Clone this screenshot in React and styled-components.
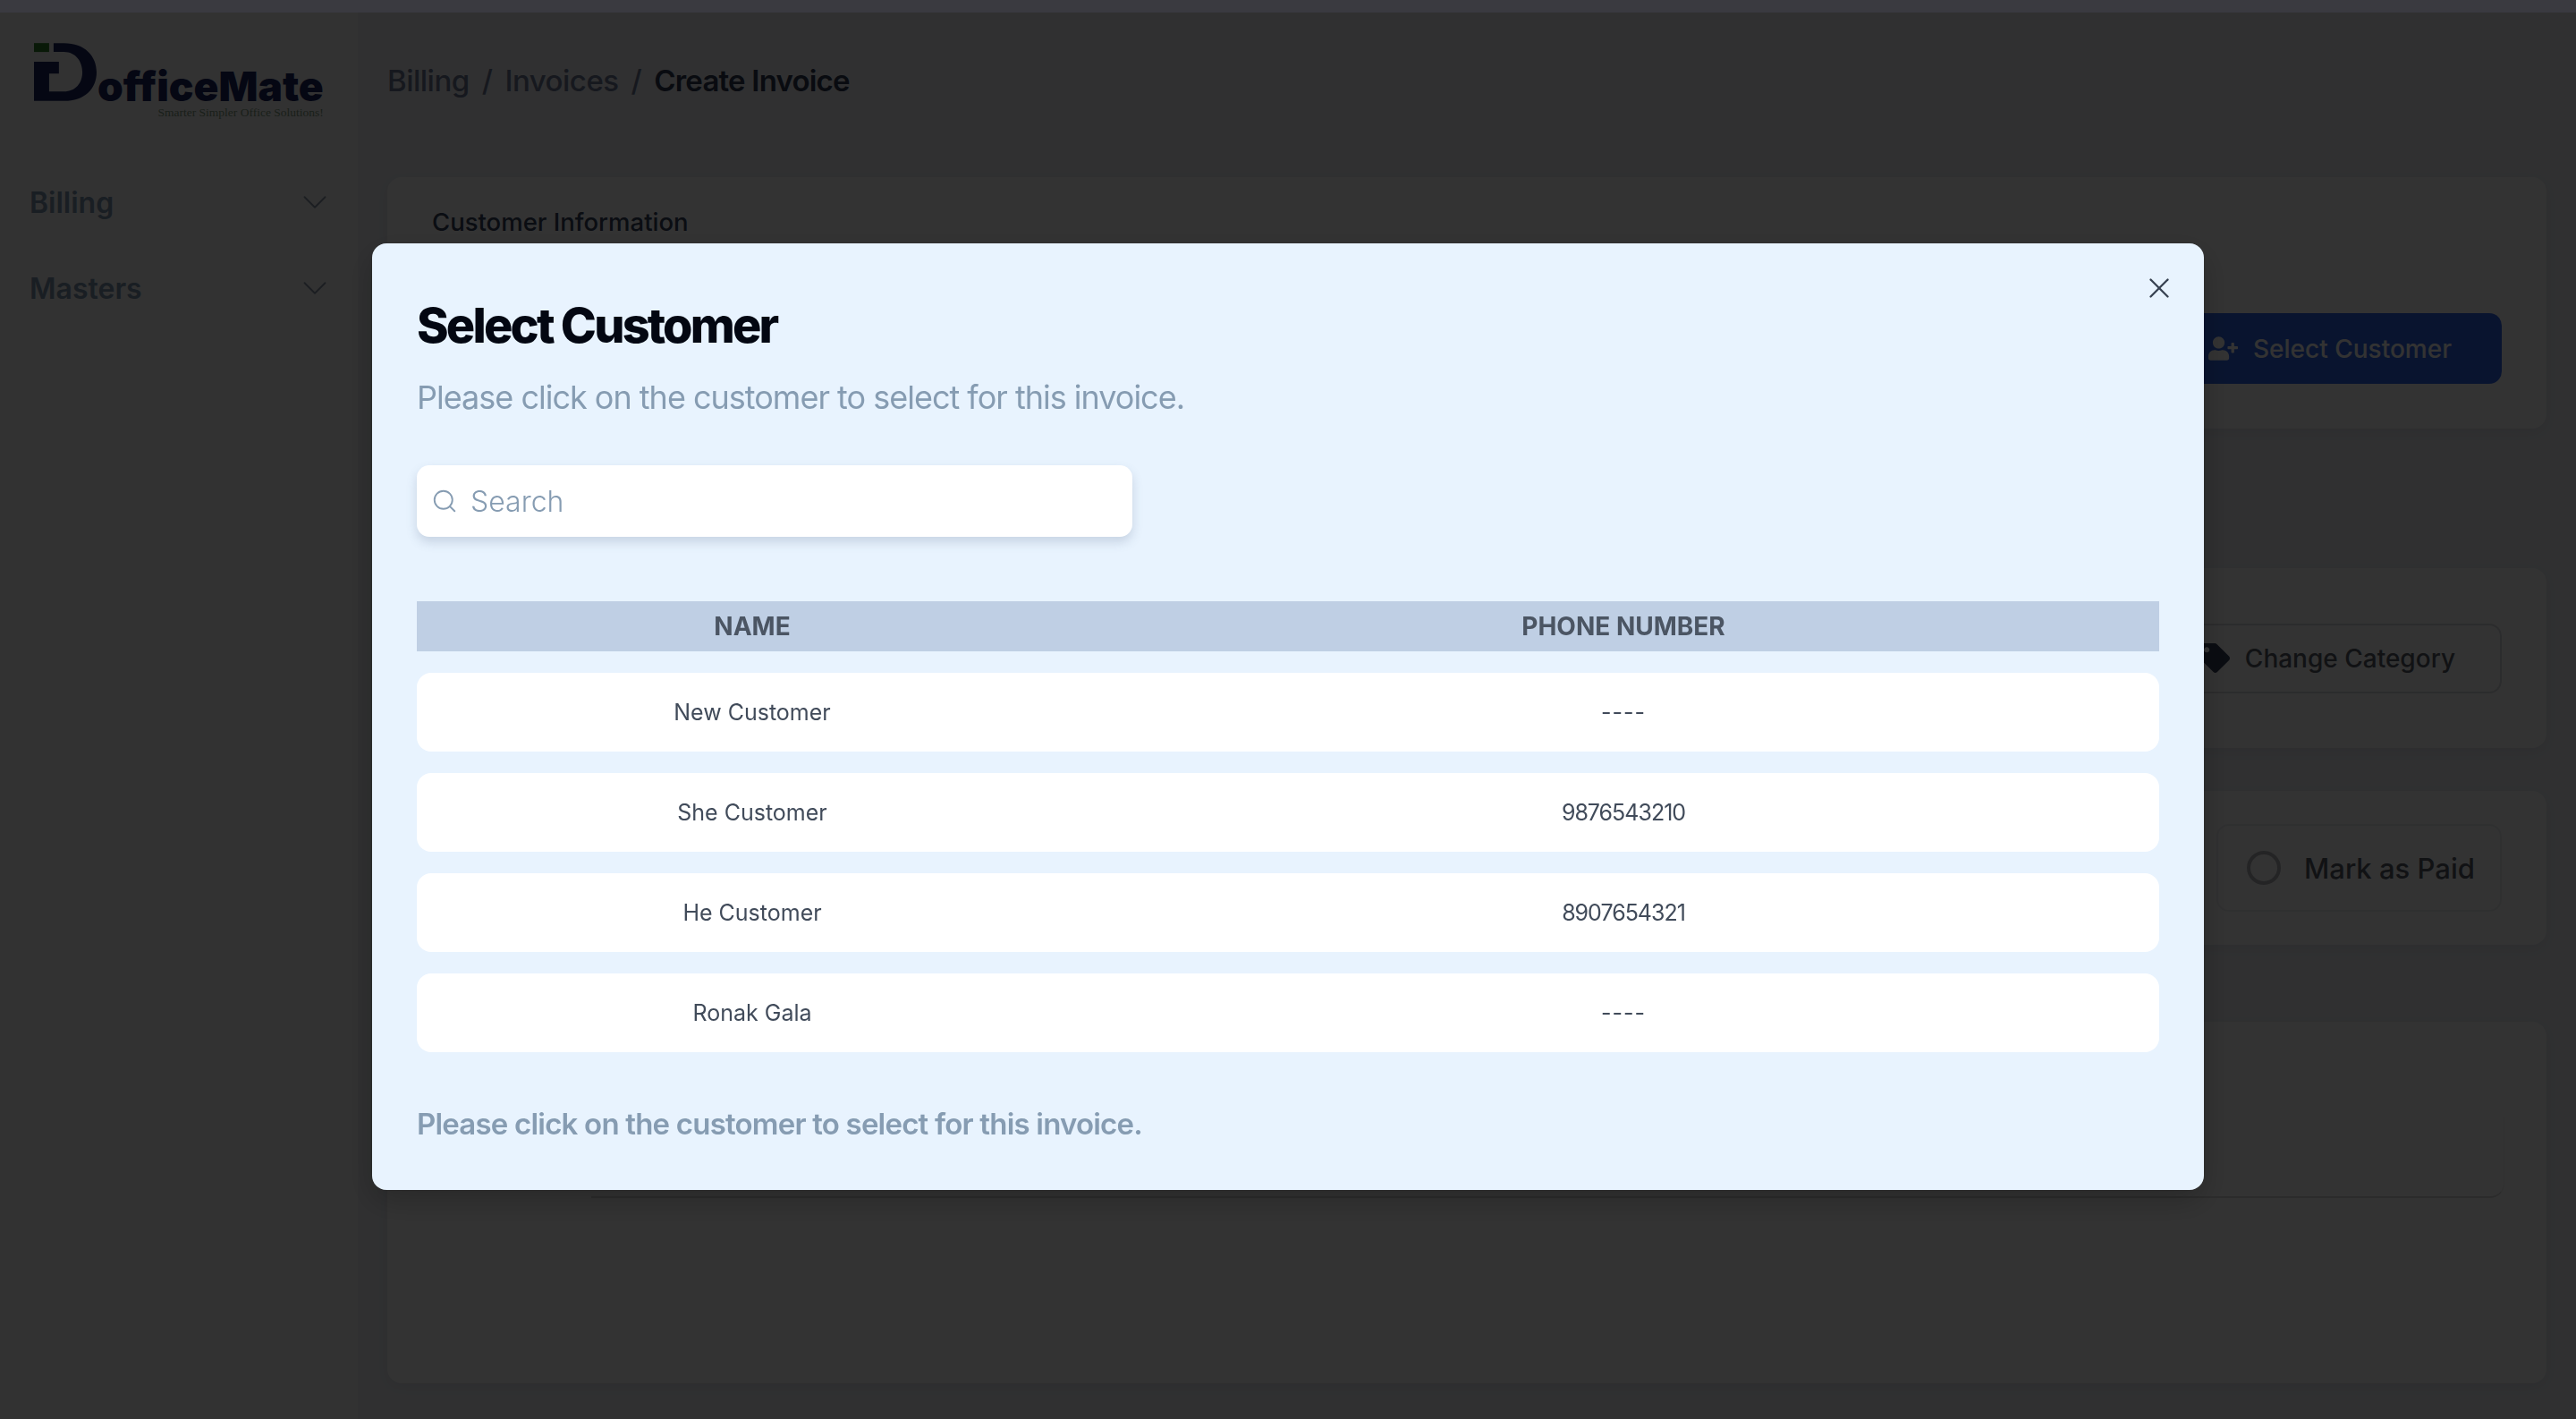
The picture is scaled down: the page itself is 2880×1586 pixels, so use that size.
import React from "react";
import styled, { createGlobalStyle } from "styled-components";
import { ChevronDown, Search, X } from "lucide-react";
import { FaTag, FaUserPlus } from "react-icons/fa";

const customers = [
  { name: "New Customer", phone: "----" },
  { name: "She Customer", phone: "9876543210" },
  { name: "He Customer", phone: "8907654321" },
  { name: "Ronak Gala", phone: "----" }
];

const GlobalStyle = createGlobalStyle`
  html, body {
    margin: 0;
    height: 100%;
    overflow: hidden;
    background: #eef0f5;
    font-family: Inter, "Liberation Sans", sans-serif;
  }
  * { box-sizing: border-box; }
`;

const TopBar = styled.div`
  position: relative;
  z-index: 20;
  height: 14px;
  background: #3a3a40;
`;

const Layout = styled.div`
  display: flex;
  height: 1572px;
`;

const Sidebar = styled.aside`
  width: 400px;
  flex: none;
  background: #fafafa;
  padding: 34px 36px 0 33px;
`;

const Logo = styled.div`
  display: flex;
  align-items: flex-start;
  height: 84px;
  margin: 0 0 74px 5px;
`;

const LogoWords = styled.div`
  display: flex;
  flex-direction: column;
  align-items: flex-end;
  padding: 26px 0 0 1px;
`;

const LogoName = styled.div`
  font-size: 46px;
  line-height: 44px;
  font-weight: 900;
  color: #192762;
`;

const LogoTag = styled.div`
  font-family: "Liberation Serif", serif;
  font-size: 13.5px;
  line-height: 16px;
  color: #7f9a80;
`;

const NavItem = styled.div`
  display: flex;
  align-items: center;
  justify-content: space-between;
  height: 40px;
  margin-bottom: 56px;
  font-size: 32px;
  font-weight: 600;
  color: #7f95ae;

  svg {
    margin-right: -11px;
    color: #8a97a8;
  }
`;

const Main = styled.main`
  flex: 1;
  padding: 56px 33px 0;
`;

const Breadcrumb = styled.nav`
  display: flex;
  align-items: center;
  gap: 14px;
  height: 40px;
  margin-bottom: 88px;
  font-size: 33px;
  font-weight: 500;
  letter-spacing: -0.5px;
  color: #6f7a95;
`;

const Crumb = styled.span`
  color: ${(p) => (p.$current ? "#2f3850" : "inherit")};
  font-weight: ${(p) => (p.$current ? 600 : 500)};
  letter-spacing: ${(p) => (p.$current ? "-0.8px" : "inherit")};
`;

const Card = styled.section`
  display: flex;
  flex-direction: column;
  justify-content: ${(p) => p.$justify || "flex-start"};
  height: ${(p) => p.$height}px;
  margin-top: ${(p) => p.$gap || 0}px;
  padding: 0 50px;
  background: #fff;
  border-radius: 16px;
  box-shadow: 0 4px 14px rgba(60, 70, 90, 0.08);
`;

const CardTitle = styled.h2`
  margin: 32px 0 0;
  font-size: 27.5px;
  line-height: 36px;
  font-weight: 500;
  color: #36405a;
`;

const CardRow = styled.div`
  display: flex;
  justify-content: flex-end;
  margin-top: ${(p) => p.$top || 0}px;
`;

const ActionButton = styled.button`
  display: flex;
  align-items: center;
  gap: 17px;
  height: ${(p) => (p.$primary ? 79 : 78)}px;
  padding: 0 ${(p) => (p.$primary ? 56 : 50)}px 0 54px;
  border-radius: 14px;
  border: ${(p) => (p.$primary ? "none" : "2px solid #d8dade")};
  background: ${(p) => (p.$primary ? "#3167eb" : "transparent")};
  color: ${(p) => (p.$primary ? "#fff" : "#555b66")};
  font-family: inherit;
  font-size: 28px;
  font-weight: 500;

  svg {
    font-size: 33px;
    color: ${(p) => (p.$primary ? "#fff" : "#36405a")};
  }
`;

const PaidToggle = styled.div`
  display: flex;
  align-items: center;
  gap: 26px;
  width: 319px;
  height: 98px;
  padding-left: 32px;
  border: 2px solid #eceef1;
  border-radius: 14px;
  font-size: 31px;
  font-weight: 500;
  color: #555b66;
`;

const Radio = styled.span`
  width: 38px;
  height: 38px;
  border-radius: 50%;
  border: 4px solid #b4b6ba;
`;

const InnerBox = styled.div`
  height: 91px;
  margin: 106px -3px 0 178px;
  border-right: 1px solid #eee;
  border-bottom: 2px solid #d8d8d8;
  border-radius: 0 0 16px 0;
`;

const Overlay = styled.div`
  position: fixed;
  inset: 0;
  z-index: 10;
  display: flex;
  justify-content: center;
  align-items: flex-start;
  padding-top: 272px;
  background: rgba(0, 0, 0, 0.8);
`;

const Modal = styled.div`
  position: relative;
  width: 2048px;
  height: 1058px;
  padding: 60px 50px 0;
  background: #e8f3fe;
  border-radius: 16px;
  box-shadow: 0 12px 34px rgba(0, 0, 0, 0.22);
`;

const CloseButton = styled.button`
  position: absolute;
  top: 31px;
  right: 31px;
  display: flex;
  padding: 0;
  border: none;
  background: none;
  color: #374151;
`;

const Title = styled.h1`
  margin: 0;
  font-size: 54px;
  line-height: 64px;
  font-weight: 800;
  letter-spacing: -2.8px;
  color: #030712;
`;

const Subtitle = styled.p`
  margin: 26px 0 0;
  font-size: 36px;
  line-height: 44px;
  letter-spacing: -1px;
  color: #869cb2;
`;

const SearchBox = styled.label`
  display: flex;
  align-items: center;
  gap: 12px;
  width: 800px;
  height: 80px;
  margin-top: 54px;
  padding-left: 16px;
  background: #fff;
  border-radius: 14px;
  box-shadow: 0 6px 12px rgba(80, 100, 130, 0.22);
  color: #869cb2;
`;

const SearchInput = styled.input`
  flex: 1;
  min-width: 0;
  border: none;
  outline: none;
  background: none;
  font-family: inherit;
  font-size: 32px;
  font-weight: 300;
  color: #374151;

  &::placeholder {
    color: #869cb2;
    opacity: 1;
  }
`;

const TableHead = styled.div`
  display: grid;
  grid-template-columns: 750px 1fr;
  align-items: center;
  height: 56px;
  margin-top: 72px;
  background: #bfcfe4;
  font-size: 28px;
  font-weight: 700;
  text-align: center;
  color: #4b5563;
`;

const TableRow = styled.div`
  display: grid;
  grid-template-columns: 750px 1fr;
  align-items: center;
  height: 88px;
  margin-top: 24px;
  background: #fff;
  border-radius: 16px;
  font-size: 25px;
  text-align: center;
  color: #414b5a;
`;

const PhoneCell = styled.span`
  letter-spacing: ${(p) => (p.$empty ? "1px" : "-1px")};
`;

const Footnote = styled.p`
  margin: 60px 0 0;
  font-size: 33px;
  line-height: 40px;
  font-weight: 600;
  letter-spacing: -0.8px;
  color: #869cb2;
`;

function LogoMark() {
  return (
    <svg width="70" height="65" viewBox="24 27 211 195">
      <rect x="24" y="27" width="51" height="30" fill="#2f7d28" />
      <path
        fill="#192762"
        d="M90 27H125C195 27 235 70 235 125C235 180 195 222 125 222H24V90H108V130H75V190H125C165 190 187 160 187 125C187 90 165 57 125 57H90Z"
      />
    </svg>
  );
}

export default function App() {
  return (
    <>
      <GlobalStyle />
      <TopBar />
      <Layout>
        <Sidebar>
          <Logo>
            <LogoMark />
            <LogoWords>
              <LogoName>officeMate</LogoName>
              <LogoTag>Smarter Simpler Office Solutions!</LogoTag>
            </LogoWords>
          </Logo>
          <NavItem>
            Billing
            <ChevronDown size={46} strokeWidth={1} />
          </NavItem>
          <NavItem>
            Masters
            <ChevronDown size={46} strokeWidth={1} />
          </NavItem>
        </Sidebar>
        <Main>
          <Breadcrumb>
            <Crumb>Billing</Crumb>
            <Crumb>/</Crumb>
            <Crumb>Invoices</Crumb>
            <Crumb>/</Crumb>
            <Crumb $current>Create Invoice</Crumb>
          </Breadcrumb>
          <Card $height={281}>
            <CardTitle>Customer Information</CardTitle>
            <CardRow $top={84}>
              <ActionButton $primary>
                <FaUserPlus />
                Select Customer
              </ActionButton>
            </CardRow>
          </Card>
          <Card $height={201} $gap={156} $justify="center">
            <CardRow>
              <ActionButton>
                <FaTag />
                Change Category
              </ActionButton>
            </CardRow>
          </Card>
          <Card $height={172} $gap={48} $justify="center">
            <CardRow>
              <PaidToggle>
                <Radio />
                Mark as Paid
              </PaidToggle>
            </CardRow>
          </Card>
          <Card $height={404} $gap={86}>
            <InnerBox />
          </Card>
        </Main>
      </Layout>
      <Overlay>
        <Modal>
          <CloseButton aria-label="Close">
            <X size={38} strokeWidth={1.5} />
          </CloseButton>
          <Title>Select Customer</Title>
          <Subtitle>Please click on the customer to select for this invoice.</Subtitle>
          <SearchBox>
            <Search size={30} strokeWidth={1.5} />
            <SearchInput placeholder="Search" />
          </SearchBox>
          <TableHead>
            <span>NAME</span>
            <span>PHONE NUMBER</span>
          </TableHead>
          {customers.map((c) => (
            <TableRow key={c.name}>
              <span>{c.name}</span>
              <PhoneCell $empty={c.phone === "----"}>{c.phone}</PhoneCell>
            </TableRow>
          ))}
          <Footnote>Please click on the customer to select for this invoice.</Footnote>
        </Modal>
      </Overlay>
    </>
  );
}
